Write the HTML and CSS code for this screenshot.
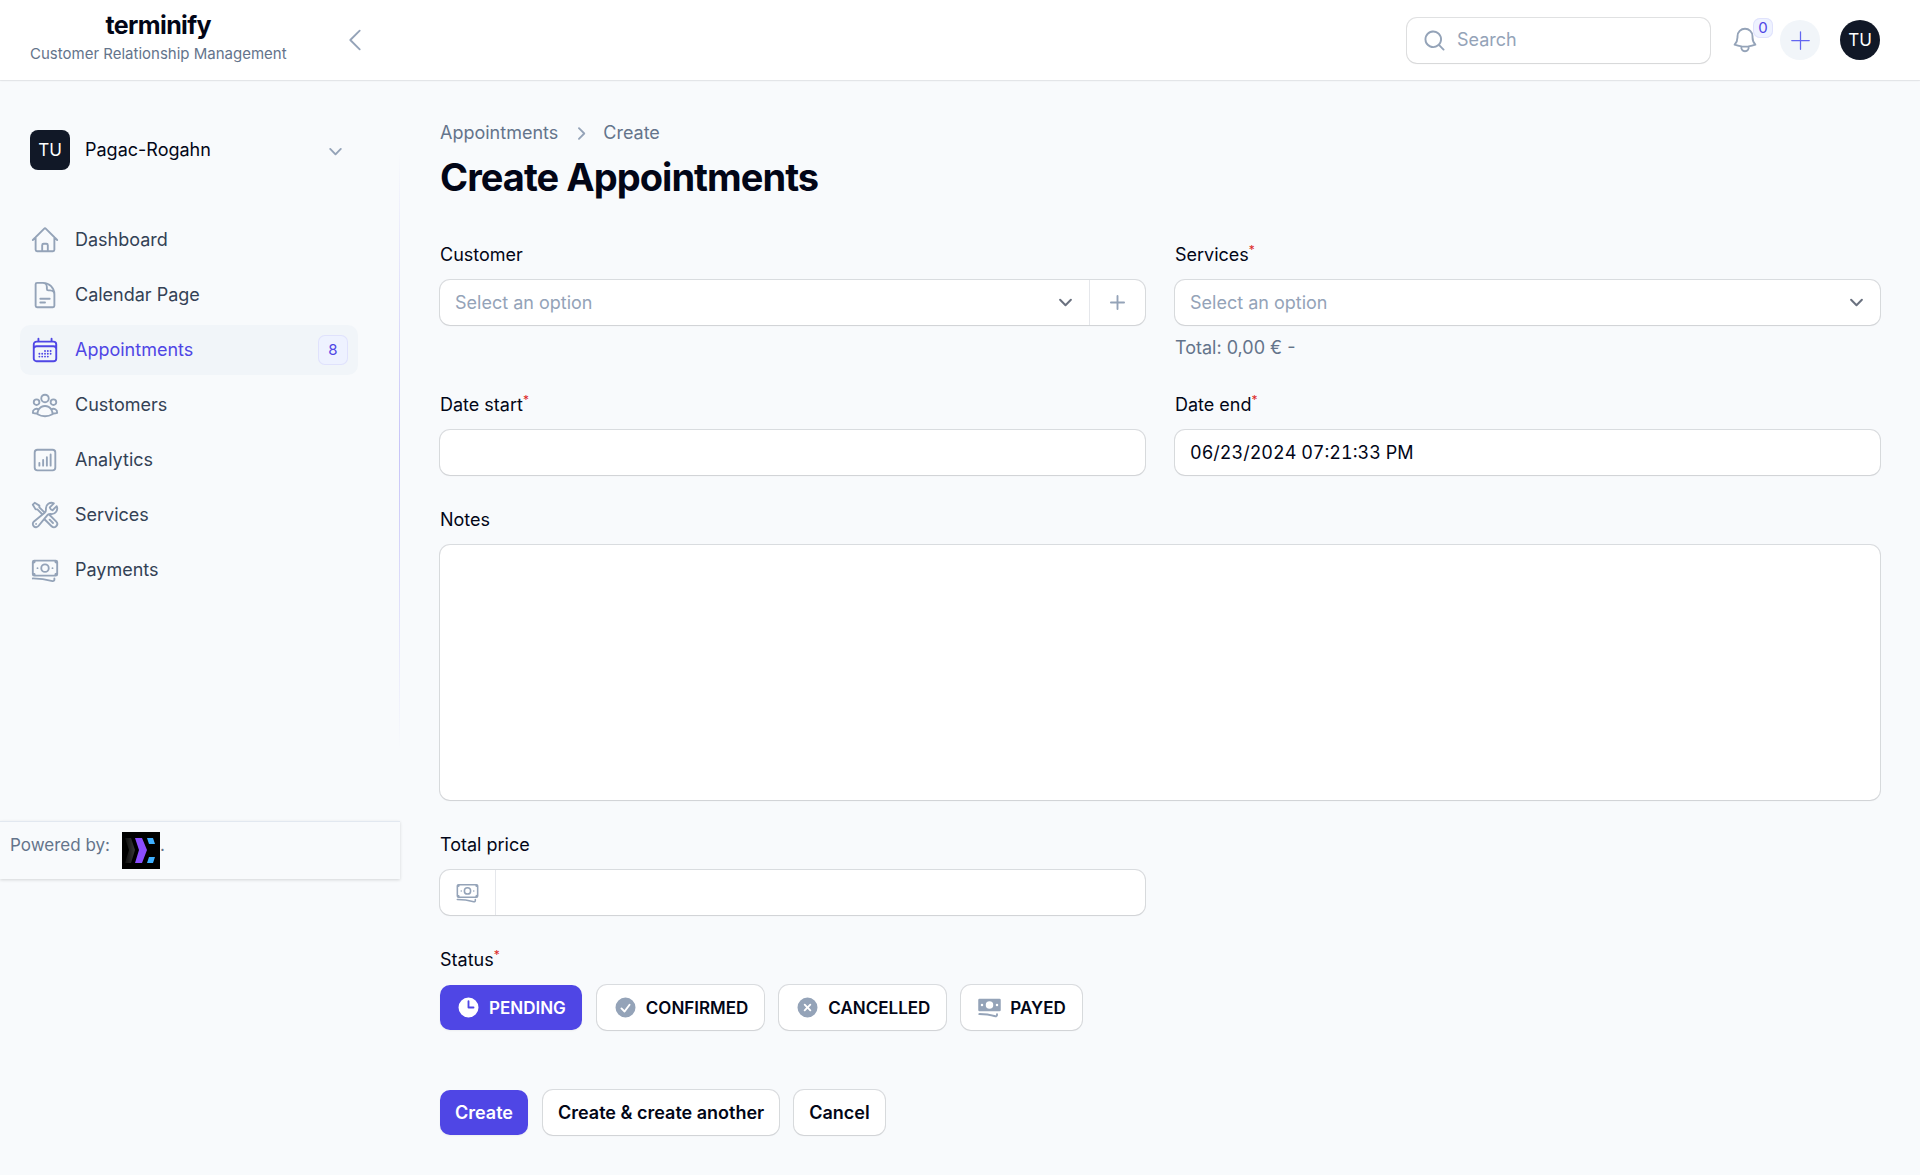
FILE: index.html
```html
<!DOCTYPE html>
<html lang="en">
<head>
<meta charset="utf-8">
<meta name="viewport" content="width=device-width, initial-scale=1">
<title>Create Appointments - terminify</title>
<link rel="stylesheet" href="styles.css">
</head>
<body>
<header class="topbar">
  <div class="topbar-start">
    <a class="brand" href="#">
      <span class="brand-name">terminify</span>
      <span class="brand-tagline">Customer Relationship Management</span>
    </a>
    <button class="icon-button" type="button" aria-label="Collapse sidebar">
      <svg class="icon icon-outline" viewBox="0 0 24 24"><path d="M15.75 19.5 8.25 12l7.5-7.5"/></svg>
    </button>
  </div>
  <div class="topbar-end">
    <div class="search">
      <svg class="icon-small" viewBox="0 0 20 20"><path fill-rule="evenodd" d="M9 3.5a5.5 5.5 0 1 0 0 11 5.5 5.5 0 0 0 0-11ZM2 9a7 7 0 1 1 12.452 4.391l3.328 3.329a.75.75 0 1 1-1.06 1.06l-3.329-3.328A7 7 0 0 1 2 9Z"/></svg>
      <input class="search-input" type="search" placeholder="Search" aria-label="Search">
    </div>
    <button class="icon-button bell" type="button" aria-label="Notifications">
      <svg class="icon icon-outline" viewBox="0 0 24 24"><path d="M14.857 17.082a23.848 23.848 0 0 0 5.454-1.31A8.967 8.967 0 0 1 18 9.75V9A6 6 0 0 0 6 9v.75a8.967 8.967 0 0 1-2.312 6.022c1.733.64 3.56 1.085 5.455 1.31m5.714 0a24.255 24.255 0 0 1-5.714 0m5.714 0a3 3 0 1 1-5.714 0"/></svg>
      <span class="bell-count">0</span>
    </button>
    <button class="quick-create" type="button" aria-label="Quick create">
      <svg class="icon-small" viewBox="0 0 20 20"><path d="M10 3v14M3 10h14" fill="none" stroke="currentColor" stroke-linecap="round"/></svg>
    </button>
    <button class="avatar avatar-round" type="button" aria-label="User menu">TU</button>
  </div>
</header>

<div class="layout">
  <aside class="sidebar">
    <button class="tenant" type="button">
      <span class="avatar">TU</span>
      <span class="tenant-name">Pagac-Rogahn</span>
      <svg class="icon-small" viewBox="0 0 20 20"><path fill-rule="evenodd" d="M5.22 8.22a.75.75 0 0 1 1.06 0L10 11.94l3.72-3.72a.75.75 0 1 1 1.06 1.06l-4.25 4.25a.75.75 0 0 1-1.06 0L5.22 9.28a.75.75 0 0 1 0-1.06Z"/></svg>
    </button>
    <nav class="nav">
      <a class="nav-item" href="#">
        <svg class="icon icon-outline" viewBox="0 0 24 24"><path d="m2.25 12 8.954-8.955c.44-.439 1.152-.439 1.591 0L21.75 12M4.5 9.75v10.125c0 .621.504 1.125 1.125 1.125H9.75v-4.875c0-.621.504-1.125 1.125-1.125h2.25c.621 0 1.125.504 1.125 1.125V21h4.125c.621 0 1.125-.504 1.125-1.125V9.75M8.25 21h8.25"/></svg>
        <span class="nav-label">Dashboard</span>
      </a>
      <a class="nav-item" href="#">
        <svg class="icon icon-outline" viewBox="0 0 24 24"><path d="M19.5 14.25v-2.625a3.375 3.375 0 0 0-3.375-3.375h-1.5A1.125 1.125 0 0 1 13.5 7.125v-1.5a3.375 3.375 0 0 0-3.375-3.375H8.25m0 12.75h7.5m-7.5 3H12M10.5 2.25H5.625c-.621 0-1.125.504-1.125 1.125v17.25c0 .621.504 1.125 1.125 1.125h12.75c.621 0 1.125-.504 1.125-1.125V11.25a9 9 0 0 0-9-9Z"/></svg>
        <span class="nav-label">Calendar Page</span>
      </a>
      <a class="nav-item nav-item-active" href="#" aria-current="page">
        <svg class="icon icon-outline" viewBox="0 0 24 24"><path d="M6.75 3v2.25M17.25 3v2.25M3 18.75V7.5a2.25 2.25 0 0 1 2.25-2.25h13.5A2.25 2.25 0 0 1 21 7.5v11.25m-18 0A2.25 2.25 0 0 0 5.25 21h13.5A2.25 2.25 0 0 0 21 18.75m-18 0v-7.5A2.25 2.25 0 0 1 5.25 9h13.5A2.25 2.25 0 0 1 21 11.25v7.5m-9-6h.008v.008H12v-.008ZM12 15h.008v.008H12V15Zm0 2.25h.008v.008H12v-.008ZM9.75 15h.008v.008H9.75V15Zm0 2.25h.008v.008H9.75v-.008ZM7.5 15h.008v.008H7.5V15Zm0 2.25h.008v.008H7.5v-.008Zm6.75-4.5h.008v.008h-.008v-.008Zm0 2.25h.008v.008h-.008V15Zm0 2.25h.008v.008h-.008v-.008Zm2.25-4.5h.008v.008H16.5v-.008Zm0 2.25h.008v.008H16.5V15Z"/></svg>
        <span class="nav-label">Appointments</span>
        <span class="nav-badge">8</span>
      </a>
      <a class="nav-item" href="#">
        <svg class="icon icon-outline" viewBox="0 0 24 24"><path d="M18 18.72a9.094 9.094 0 0 0 3.741-.479 3 3 0 0 0-4.682-2.72m.94 3.198.001.031c0 .225-.012.447-.037.666A11.944 11.944 0 0 1 12 21c-2.17 0-4.207-.576-5.963-1.584A6.062 6.062 0 0 1 6 18.719m12 0a5.971 5.971 0 0 0-.941-3.197m0 0A5.995 5.995 0 0 0 12 12.75a5.995 5.995 0 0 0-5.058 2.772m0 0a3 3 0 0 0-4.681 2.72 8.986 8.986 0 0 0 3.74.477m.94-3.197a5.971 5.971 0 0 0-.94 3.197M15 6.75a3 3 0 1 1-6 0 3 3 0 0 1 6 0Zm6 3a2.25 2.25 0 1 1-4.5 0 2.25 2.25 0 0 1 4.5 0Zm-13.5 0a2.25 2.25 0 1 1-4.5 0 2.25 2.25 0 0 1 4.5 0Z"/></svg>
        <span class="nav-label">Customers</span>
      </a>
      <a class="nav-item" href="#">
        <svg class="icon icon-outline" viewBox="0 0 24 24"><path d="M7.5 14.25v2.25m3-4.5v4.5m3-6.75v6.75m3-9v9M6 20.25h12A2.25 2.25 0 0 0 20.25 18V6A2.25 2.25 0 0 0 18 3.75H6A2.25 2.25 0 0 0 3.75 6v12A2.25 2.25 0 0 0 6 20.25Z"/></svg>
        <span class="nav-label">Analytics</span>
      </a>
      <a class="nav-item" href="#">
        <svg class="icon icon-outline" viewBox="0 0 24 24"><path d="M11.42 15.17 17.25 21A2.652 2.652 0 0 0 21 17.25l-5.877-5.877M11.42 15.17l2.496-3.03c.317-.384.74-.626 1.208-.766M11.42 15.17l-4.655 5.653a2.548 2.548 0 1 1-3.586-3.586l6.837-5.63m5.108-.233c.55-.164 1.163-.188 1.743-.14a4.5 4.5 0 0 0 4.486-6.336l-3.276 3.277a3.004 3.004 0 0 1-2.25-2.25l3.276-3.276a4.5 4.5 0 0 0-6.336 4.486c.091 1.076-.071 2.264-.904 2.95l-.102.085m-1.745 1.437L5.909 7.5H4.5L2.25 3.75l1.5-1.5L7.5 4.5v1.409l4.26 4.26m-1.745 1.437 1.745-1.437m6.615 8.206L15.75 15.75M4.867 19.125h.008v.008h-.008v-.008Z"/></svg>
        <span class="nav-label">Services</span>
      </a>
      <a class="nav-item" href="#">
        <svg class="icon icon-outline" viewBox="0 0 24 24"><path d="M2.25 18.75a60.07 60.07 0 0 1 15.797 2.101c.727.198 1.453-.342 1.453-1.096V18.75M3.75 4.5v.75A.75.75 0 0 1 3 6h-.75m0 0v-.375c0-.621.504-1.125 1.125-1.125H20.25M2.25 6v9m18-10.5v.75c0 .414.336.75.75.75h.75m-1.5-1.5h.375c.621 0 1.125.504 1.125 1.125v9.75c0 .621-.504 1.125-1.125 1.125h-.375m1.5-1.5H21a.75.75 0 0 0-.75.75v.75m0 0H3.75m0 0h-.375a1.125 1.125 0 0 1-1.125-1.125V15m1.5 1.5v-.75A.75.75 0 0 0 3 15h-.75M15 10.5a3 3 0 1 1-6 0 3 3 0 0 1 6 0Zm3 0h.008v.008H18V10.5Zm-12 0h.008v.008H6V10.5Z"/></svg>
        <span class="nav-label">Payments</span>
      </a>
    </nav>
    <footer class="powered">
      <span>Powered by:</span>
      <a class="powered-link" href="#" aria-label="Vendor site">
        <svg class="powered-logo" viewBox="0 0 38 37">
          <defs><linearGradient id="chevron-shade"><stop offset="0" stop-color="#0c0c0c"/><stop offset="1" stop-color="#383838"/></linearGradient></defs>
          <rect width="38" height="37"/>
          <path d="M3 6h6l4 12-4 13H3l4-13z" fill="url(#chevron-shade)"/>
          <path d="M13 6h7l5 12-5 13h-7l4-13z" fill="#8b4dff"/>
          <path d="M25 6h6l2 6h-6zM27 25h6l-2 6h-6z" fill="#3fb0ff"/>
        </svg>
      </a><span>.</span>
    </footer>
  </aside>

  <main class="main">
    <div class="page-header">
      <nav class="breadcrumbs" aria-label="Breadcrumb">
        <a href="#">Appointments</a>
        <svg class="icon-small" viewBox="0 0 20 20"><path fill-rule="evenodd" d="M8.22 5.22a.75.75 0 0 1 1.06 0l4.25 4.25a.75.75 0 0 1 0 1.06l-4.25 4.25a.75.75 0 0 1-1.06-1.06L11.94 10 8.22 6.28a.75.75 0 0 1 0-1.06Z"/></svg>
        <a href="#">Create</a>
      </nav>
      <h1 class="page-title">Create Appointments</h1>
    </div>

    <form class="form">
      <div class="field">
        <label class="label" for="customer">Customer</label>
        <div class="control">
          <select class="input select" id="customer"><option>Select an option</option></select>
          <button class="control-action" type="button" aria-label="Create customer">
            <svg class="icon-small" viewBox="0 0 20 20"><path d="M10.75 4.75a.75.75 0 0 0-1.5 0v4.5h-4.5a.75.75 0 0 0 0 1.5h4.5v4.5a.75.75 0 0 0 1.5 0v-4.5h4.5a.75.75 0 0 0 0-1.5h-4.5v-4.5Z"/></svg>
          </button>
        </div>
      </div>
      <div class="field">
        <label class="label" for="services">Services<sup class="required">*</sup></label>
        <div class="control">
          <select class="input select" id="services"><option>Select an option</option></select>
        </div>
        <p class="hint">Total: 0,00 € -</p>
      </div>
      <div class="field">
        <label class="label" for="date-start">Date start<sup class="required">*</sup></label>
        <div class="control"><input class="input input-date" id="date-start" type="text"></div>
      </div>
      <div class="field">
        <label class="label" for="date-end">Date end<sup class="required">*</sup></label>
        <div class="control"><input class="input input-date" id="date-end" type="text" value="06/23/2024 07:21:33 PM"></div>
      </div>
      <div class="field field-wide">
        <label class="label" for="notes">Notes</label>
        <div class="control"><textarea class="input textarea" id="notes"></textarea></div>
      </div>
      <div class="field field-start">
        <label class="label" for="total-price">Total price</label>
        <div class="control">
          <span class="control-prefix">
            <svg class="icon-small icon-outline" viewBox="0 0 24 24"><path d="M2.25 18.75a60.07 60.07 0 0 1 15.797 2.101c.727.198 1.453-.342 1.453-1.096V18.75M3.75 4.5v.75A.75.75 0 0 1 3 6h-.75m0 0v-.375c0-.621.504-1.125 1.125-1.125H20.25M2.25 6v9m18-10.5v.75c0 .414.336.75.75.75h.75m-1.5-1.5h.375c.621 0 1.125.504 1.125 1.125v9.75c0 .621-.504 1.125-1.125 1.125h-.375m1.5-1.5H21a.75.75 0 0 0-.75.75v.75m0 0H3.75m0 0h-.375a1.125 1.125 0 0 1-1.125-1.125V15m1.5 1.5v-.75A.75.75 0 0 0 3 15h-.75M15 10.5a3 3 0 1 1-6 0 3 3 0 0 1 6 0Zm3 0h.008v.008H18V10.5Zm-12 0h.008v.008H6V10.5Z"/></svg>
          </span>
          <input class="input" id="total-price" type="text" inputmode="decimal">
        </div>
      </div>
      <fieldset class="field field-wide status">
        <legend class="label">Status<sup class="required">*</sup></legend>
        <div class="button-row">
          <label class="button button-toggle">
            <input class="status-radio" type="radio" name="status" value="pending" checked>
            <svg class="icon-small" viewBox="0 0 20 20"><path fill-rule="evenodd" d="M10 18a8 8 0 1 0 0-16 8 8 0 0 0 0 16Zm.75-13a.75.75 0 0 0-1.5 0v5c0 .414.336.75.75.75h4a.75.75 0 0 0 0-1.5h-3.25V5Z"/></svg>
            <span>PENDING</span>
          </label>
          <label class="button button-toggle">
            <input class="status-radio" type="radio" name="status" value="confirmed">
            <svg class="icon-small" viewBox="0 0 20 20"><path fill-rule="evenodd" d="M10 18a8 8 0 1 0 0-16 8 8 0 0 0 0 16Zm3.857-9.809a.75.75 0 0 0-1.214-.882l-3.483 4.79-1.88-1.88a.75.75 0 1 0-1.06 1.061l2.5 2.5a.75.75 0 0 0 1.137-.089l4-5.5Z"/></svg>
            <span>CONFIRMED</span>
          </label>
          <label class="button button-toggle">
            <input class="status-radio" type="radio" name="status" value="cancelled">
            <svg class="icon-small" viewBox="0 0 20 20"><path fill-rule="evenodd" d="M10 18a8 8 0 1 0 0-16 8 8 0 0 0 0 16ZM8.28 7.22a.75.75 0 0 0-1.06 1.06L8.94 10l-1.72 1.72a.75.75 0 1 0 1.06 1.06L10 11.06l1.72 1.72a.75.75 0 1 0 1.06-1.06L11.06 10l1.72-1.72a.75.75 0 0 0-1.06-1.06L10 8.94 8.28 7.22Z"/></svg>
            <span>CANCELLED</span>
          </label>
          <label class="button button-toggle">
            <input class="status-radio" type="radio" name="status" value="payed">
            <svg class="icon-small" viewBox="0 0 20 20"><path fill-rule="evenodd" d="M1 4a1 1 0 0 1 1-1h16a1 1 0 0 1 1 1v8a1 1 0 0 1-1 1H2a1 1 0 0 1-1-1V4Zm12 4a3 3 0 1 1-6 0 3 3 0 0 1 6 0ZM4 9a1 1 0 1 0 0-2 1 1 0 0 0 0 2Zm13-1a1 1 0 1 1-2 0 1 1 0 0 1 2 0ZM1.75 14.5a.75.75 0 0 0 0 1.5c4.417 0 8.693.603 12.749 1.73 1.111.309 2.251-.512 2.251-1.696v-.784a.75.75 0 0 0-1.5 0v.784a.272.272 0 0 1-.35.25A49.043 49.043 0 0 0 1.75 14.5Z"/></svg>
            <span>PAYED</span>
          </label>
        </div>
      </fieldset>
      <div class="button-row actions">
        <button class="button button-primary" type="submit">Create</button>
        <button class="button" type="button">Create &amp; create another</button>
        <button class="button" type="button">Cancel</button>
      </div>
    </form>
  </main>
</div>
</body>
</html>
```
FILE: styles.css
```css
:root {
  --ink: #020617;
  --text: #334155;
  --muted: #64748b;
  --faint: #94a3b8;
  --primary: #4f46e5;
  --line: rgba(3, 7, 18, 0.12);
  --field-shadow: 0 0 0 1px var(--line), 0 1px 2px rgba(0, 0, 0, 0.05);
}

* {
  box-sizing: border-box;
}

body {
  margin: 0;
  min-height: 100vh;
  background: #f8fafc;
  color: var(--ink);
  font-family: Inter, "Liberation Sans", sans-serif;
  font-size: 18px;
  line-height: 26px;
}

button,
input,
select,
textarea {
  font: inherit;
  color: inherit;
}

button {
  border: 0;
  padding: 0;
  background: none;
  cursor: pointer;
}

a {
  color: inherit;
  text-decoration: none;
}

.icon {
  flex: none;
  width: 30px;
  height: 30px;
  fill: currentColor;
}

.icon-small {
  flex: none;
  width: 25px;
  height: 25px;
  fill: currentColor;
}

.icon-outline {
  fill: none;
  stroke: currentColor;
  stroke-width: 1.5;
  stroke-linecap: round;
  stroke-linejoin: round;
}

.icon-button {
  display: flex;
  color: var(--faint);
}

.avatar {
  display: flex;
  flex: none;
  align-items: center;
  justify-content: center;
  width: 40px;
  height: 40px;
  border-radius: 8px;
  background: #111827;
  color: #fff;
  font-size: 17px;
}

.avatar-round {
  border-radius: 50%;
}

/* Top bar */

.topbar {
  display: flex;
  align-items: center;
  justify-content: space-between;
  height: 80px;
  background: #fff;
  box-shadow: 0 0 0 1px rgba(3, 7, 18, 0.05), 0 1px 2px rgba(0, 0, 0, 0.05);
}

.topbar-start {
  display: flex;
  align-items: center;
  justify-content: space-between;
  width: 400px;
  padding: 0 30px;
}

.brand {
  display: flex;
  flex-direction: column;
  align-items: center;
  padding-bottom: 2px;
}

.brand-name {
  font-size: 25px;
  font-weight: 700;
  line-height: 30px;
  letter-spacing: -0.025em;
}

.brand-tagline {
  color: var(--muted);
  font-size: 15px;
  line-height: 28px;
}

.topbar-end {
  display: flex;
  align-items: center;
  gap: 20px;
  padding-right: 40px;
}

.search {
  display: flex;
  align-items: center;
  gap: 10px;
  width: 303px;
  height: 45px;
  padding: 0 15px;
  border-radius: 10px;
  background: #fff;
  box-shadow: var(--field-shadow);
  color: var(--faint);
}

.search-input {
  flex: 1;
  min-width: 0;
  border: 0;
  padding: 0;
  outline: 0;
  background: none;
  appearance: none;
}

.search-input::placeholder {
  color: var(--faint);
}

.bell {
  position: relative;
}

.bell-count {
  position: absolute;
  top: -7px;
  left: 23px;
  min-width: 20px;
  border-radius: 7px;
  background: #eef2ff;
  box-shadow: inset 0 0 0 1px #e0e2fc;
  color: var(--primary);
  font-size: 15px;
  line-height: 20px;
  text-align: center;
}

.quick-create {
  display: flex;
  align-items: center;
  justify-content: center;
  width: 40px;
  height: 40px;
  border-radius: 50%;
  background: #f1f5f9;
  color: #6366f1;
}

/* Page frame */

.layout {
  display: flex;
  align-items: flex-start;
}

.sidebar {
  display: flex;
  flex: none;
  flex-direction: column;
  width: 400px;
  background: linear-gradient(rgba(199, 196, 248, 0), #c7c4f8 50%, rgba(199, 196, 248, 0)) right 0 top 70px / 1px 600px no-repeat;
}

.tenant {
  display: flex;
  align-items: center;
  gap: 15px;
  margin: 50px 52px 45px 30px;
  text-align: left;
  color: var(--faint);
}

.tenant-name {
  flex: 1;
  color: var(--ink);
}

.nav {
  display: flex;
  flex-direction: column;
  gap: 5px;
  padding: 0 42px 0 20px;
}

.nav-item {
  display: flex;
  align-items: center;
  gap: 15px;
  height: 50px;
  padding: 0 10px;
  border-radius: 10px;
  color: var(--text);
}

.nav-item .icon {
  color: var(--faint);
}

.nav-label {
  flex: 1;
}

.nav-item-active {
  background: #f1f5f9;
}

.nav-item-active,
.nav-item-active .icon {
  color: var(--primary);
}

.nav-badge {
  min-width: 30px;
  border-radius: 7px;
  background: #eef2ff;
  box-shadow: inset 0 0 0 1px #e0e2fc;
  font-size: 15px;
  line-height: 30px;
  text-align: center;
}

.powered {
  display: flex;
  height: 58px;
  margin-top: 226px;
  padding: 10px;
  border-top: 1px solid #e2e8f0;
  box-shadow: 0 1px 3px rgba(0, 0, 0, 0.15);
  color: var(--muted);
  font-size: 17px;
}

.powered-link {
  margin-left: 12px;
}

.powered-logo {
  display: block;
  width: 38px;
  height: 37px;
}

/* Main column */

.main {
  flex: 1;
  min-width: 0;
  padding: 40px;
}

.page-header {
  display: flex;
  flex-direction: column;
  gap: 9px;
  margin-bottom: 40px;
}

.breadcrumbs {
  display: flex;
  align-items: center;
  gap: 10px;
  color: var(--muted);
}

.breadcrumbs .icon-small {
  color: var(--faint);
}

.page-title {
  margin: 0;
  font-size: 38px;
  font-weight: 700;
  line-height: 45px;
  letter-spacing: -0.025em;
}

.form {
  display: grid;
  grid-template-columns: 1fr 1fr;
  gap: 30px;
  align-items: start;
}

.field {
  display: flex;
  flex-direction: column;
  gap: 10px;
  min-width: 0;
}

.field-wide {
  grid-column: 1 / -1;
}

.field-start {
  grid-column: 1;
}

.label {
  line-height: 30px;
}

.required {
  color: #dc2626;
  font-size: 12px;
  line-height: 0;
}

.control {
  display: flex;
  border-radius: 10px;
  background: #fff;
  box-shadow: var(--field-shadow);
}

.input {
  flex: 1;
  min-width: 0;
  height: 45px;
  border: 0;
  border-radius: 10px;
  outline: 0;
  padding: 0 15px;
  background: none;
}

.input-date {
  font-variant-numeric: tabular-nums;
}

.select {
  appearance: none;
  color: var(--faint);
  background: url("data:image/svg+xml,%3Csvg xmlns='http://www.w3.org/2000/svg' fill='none' viewBox='0 0 20 20'%3E%3Cpath stroke='%236b7280' stroke-linecap='round' stroke-linejoin='round' stroke-width='1.5' d='m6 8 4 4 4-4'/%3E%3C/svg%3E") right 10px center / 27px no-repeat;
}

.textarea {
  display: block;
  height: 255px;
  padding: 10px 15px;
  resize: none;
}

.control-action,
.control-prefix {
  display: flex;
  flex: none;
  align-items: center;
  justify-content: center;
  width: 56px;
  color: var(--faint);
}

.control-action {
  border-left: 1px solid #e5e7eb;
}

.control-prefix {
  border-right: 1px solid #e5e7eb;
}

.hint {
  margin: 0;
  color: var(--muted);
  line-height: 25px;
}

.status {
  display: block;
  margin: 0;
  border: 0;
  padding: 0;
}

.status .label {
  margin-bottom: 10px;
  padding: 0;
}

.button-row {
  display: flex;
  flex-wrap: wrap;
  gap: 15px;
}

.button {
  display: flex;
  align-items: center;
  gap: 8px;
  height: 45px;
  padding: 0 15px;
  border-radius: 10px;
  background: #fff;
  box-shadow: var(--field-shadow);
  font-weight: 600;
  cursor: pointer;
}

.button-toggle {
  padding: 0 16px;
  font-size: 17px;
}

.button .icon-small {
  color: var(--faint);
}

.status-radio {
  position: absolute;
  margin: 0;
  opacity: 0;
}

.button-primary,
.button:has(:checked) {
  background: var(--primary);
  box-shadow: 0 1px 2px rgba(0, 0, 0, 0.05);
  color: #fff;
}

.button:has(:checked) .icon-small {
  color: #fff;
}

.actions {
  grid-column: 1 / -1;
  margin-top: 30px;
}
```
